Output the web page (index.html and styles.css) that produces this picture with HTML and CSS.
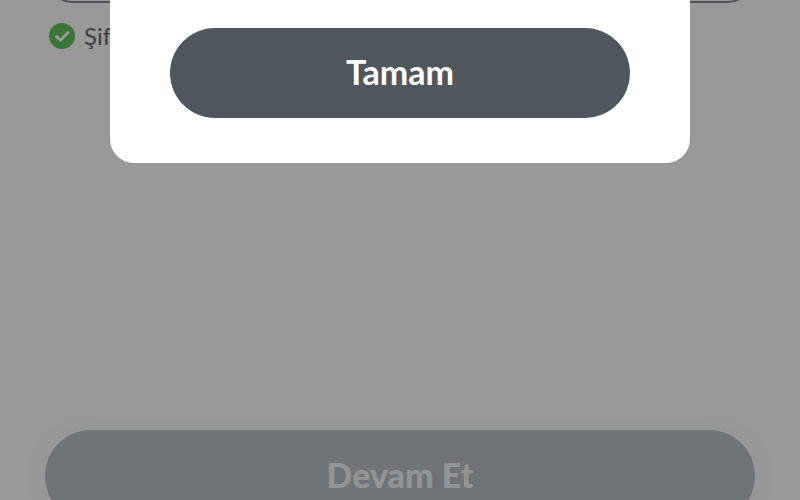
FILE: index.html
```html
<!DOCTYPE html>
<html lang="tr">

<head>
    <meta charset="UTF-8">
    <meta name="viewport" content="width=device-width, initial-scale=1.0">
    <title>Tamam</title>
    <link rel="stylesheet" href="styles.css">
</head>

<body>

    <!-- Password form behind the dialog -->
    <form class="page">
        <input class="field" type="password" id="password">
        <label class="hint" for="password">
            <svg class="hint-icon" viewBox="0 0 26 26" aria-hidden="true">
                <circle cx="13" cy="13" r="13" fill="#5fc55d" />
                <path d="M7.5 13.5l4 3.8 7.5-7.8" fill="none" stroke="#fff" stroke-width="2.8" stroke-linecap="round" stroke-linejoin="round" />
            </svg>
            <span>Şif</span>
        </label>
        <button class="continue" type="submit">Devam Et</button>
    </form>

    <!-- Dialog -->
    <div class="overlay">
        <div class="dialog" role="dialog">
            <button class="confirm" type="button">Tamam</button>
        </div>
    </div>

</body>

</html>
```

FILE: styles.css
```css
* {
    box-sizing: border-box;
}

body {
    margin: 0;
    font-family: Lato, "Open Sans", sans-serif;
    background: #fff;
    height: 100vh;
    overflow: hidden;
}

.page {
    display: flex;
    flex-direction: column;
    height: 100vh;
    padding: 0 45px;
}

.field {
    flex: none;
    height: 90px;
    margin: -87px 3px 0;
    padding: 0 24px;
    border: 2px solid #888b90;
    border-radius: 24px;
    background: #fff;
    font-size: 24px;
}

.hint {
    display: flex;
    align-items: center;
    gap: 9px;
    margin: 17px 4px 0;
    font-size: 24px;
    line-height: 32px;
    color: #6a6a74;
}

.hint-icon {
    width: 26px;
    height: 26px;
}

button {
    border: none;
    padding: 0 0 2px;
    font-family: inherit;
    font-size: 34px;
    line-height: 40px;
    font-weight: 700;
    border-radius: 48px;
    cursor: pointer;
}

.continue {
    flex: none;
    height: 92px;
    margin-top: auto;
    margin-bottom: -22px;
    background: #bbc0c6;
    color: #f6f7f8;
    font-weight: 900;
    box-shadow: 0 0 30px rgba(0, 0, 0, 0.04);
}

/* Dark layer that covers the form */
.overlay {
    position: fixed;
    inset: 0;
    padding: 0 110px;
    background: rgba(0, 0, 0, 0.4);
}

.dialog {
    padding: 28px 60px 45px;
    background: #fff;
    border-radius: 0 0 24px 24px;
}

.confirm {
    display: block;
    width: 100%;
    height: 90px;
    background: #50565e;
    color: #fff;
}
```
